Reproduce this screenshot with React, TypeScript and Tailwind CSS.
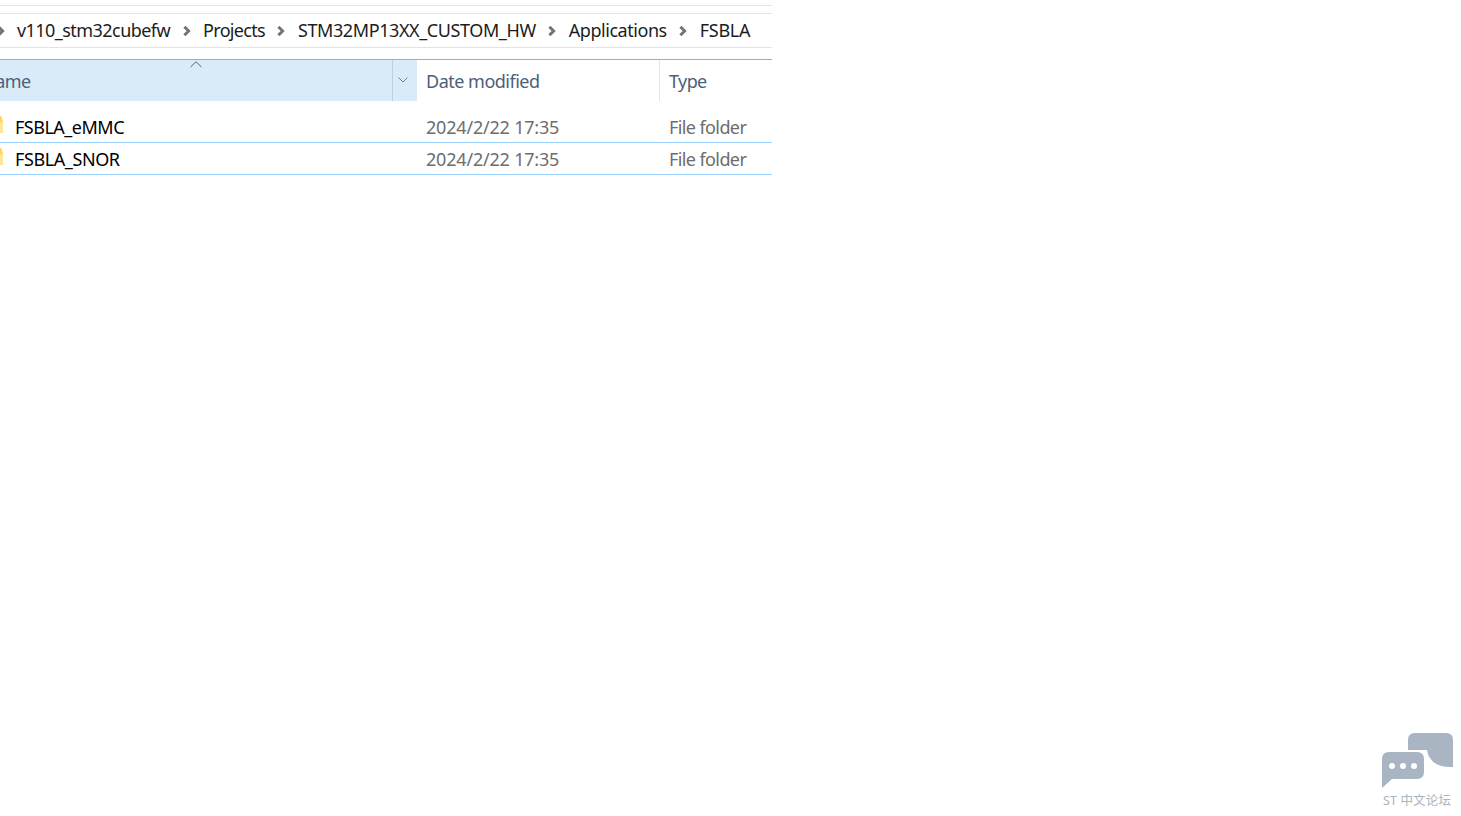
const font = "font-['Noto_Sans','Open_Sans',sans-serif]";

function Chevron() {
  return (
    <svg width="8" height="10" viewBox="0 0 8 10" className="block shrink-0">
      <path d="M1.4 0.8 L5.6 5 L1.4 9.2" fill="none" stroke="#747474" strokeWidth="3" />
    </svg>
  );
}

function Folder() {
  return (
    <svg width="4" height="18" viewBox="0 0 4 18" className="-mt-[5px] shrink-0">
      <path d="M0 0 H1 L3 5 V17 H0 Z" fill="#ffd469" />
      <path d="M0 6 H3 V17 H0 Z" fill="#ffe698" />
    </svg>
  );
}

function Row({ name, spacing }: { name: string; spacing: string }) {
  return (
    <div className="flex h-8 items-center border-b border-[#99d1ff] pt-[1px]">
      <div className="flex w-[426px] items-center">
        <Folder />
        <span className={`ml-[11px] text-[18px] text-black ${spacing}`}>{name}</span>
      </div>
      <span className="w-[243px] text-[18px] tracking-[-0.2px] text-[#6d6d6d]">2024/2/22 17:35</span>
      <span className="text-[18px] tracking-[-0.6px] text-[#6d6d6d]">File folder</span>
    </div>
  );
}

export default function App() {
  return (
    <div className={`relative h-[816px] w-[1461px] overflow-hidden bg-white ${font}`}>
      <div className="w-[772px] pt-[5px]">
        <div className="h-[9px] border-y border-[#e3e3e3]" />
        <div className="flex h-[33px] items-center text-[18px] text-[#1c1c1c]">
          <div className="-ml-[3px] mr-[3px] w-[17px]"><Chevron /></div>
          <span className="tracking-[-0.55px]">v110_stm32cubefw</span>
          <span className="mx-[12.5px]"><Chevron /></span>
          <span className="tracking-[-0.7px]">Projects</span>
          <span className="mx-[12.5px]"><Chevron /></span>
          <span className="tracking-[-0.4px]">STM32MP13XX_CUSTOM_HW</span>
          <span className="mx-[12.5px]"><Chevron /></span>
          <span className="tracking-[-0.45px]">Applications</span>
          <span className="mx-[12.5px]"><Chevron /></span>
          <span className="tracking-[-0.3px]">FSBLA</span>
        </div>
        <div className="h-[12px] border-t border-[#e3e3e3]" />
        <div className="flex h-[42px] border-t border-[#a9a9a9]">
          <div className="relative flex w-[417px] bg-[#d9ebf9]">
            <div className="flex flex-1 items-center overflow-hidden border-r border-[#bcd0df] pt-[2px]">
              <span className="-ml-[18px] text-[18px] tracking-[-0.55px] text-[#4c607a]">Name</span>
            </div>
            <div className="flex w-[24px] items-center justify-center pb-[1px] pr-[4px]">
              <svg width="10" height="6" viewBox="0 0 10 6"><path d="M0.5 0.5 L5 5 L9.5 0.5" fill="none" stroke="#6d7f90" strokeWidth="1" /></svg>
            </div>
            <svg width="12" height="7" viewBox="0 0 12 7" className="absolute left-[190px] top-[1px]"><path d="M0.5 6 L6 0.8 L11.5 6" fill="none" stroke="#666" strokeWidth="1" /></svg>
          </div>
          <div className="flex w-[243px] items-center border-r border-[#e5e5e5] pl-[9px] pt-[2px] text-[18px] tracking-[-0.5px] text-[#4c607a]">Date modified</div>
          <div className="flex items-center pl-[9px] pt-[2px] text-[18px] tracking-[-0.6px] text-[#4c607a]">Type</div>
        </div>
        <div className="pt-[10px]">
          <Row name="FSBLA_eMMC" spacing="tracking-[-0.5px]" />
          <Row name="FSBLA_SNOR" spacing="tracking-[-0.4px]" />
        </div>
      </div>
      <div className="absolute right-[8px] top-[732px] flex w-[72px] flex-col items-center">
        <svg width="72" height="58" viewBox="0 0 72 58">
          <path d="M27 8 Q27 1 34 1 H65 Q72 1 72 8 V35 Q49 36 46 18 H27 Z" fill="#a9b5c2" />
          <path d="M1 27 Q1 20 8 20 H36 Q43 20 43 27 V40 Q43 47 36 47 H11 L1 56 Z" fill="#a9b5c2" />
          <circle cx="11" cy="34" r="3" fill="#fff" />
          <circle cx="22" cy="34" r="3" fill="#fff" />
          <circle cx="33" cy="34" r="3" fill="#fff" />
        </svg>
        <span className="mt-[1px] whitespace-nowrap font-['Noto_Sans','Noto_Sans_CJK_SC',sans-serif] text-[12.5px] leading-[20px] tracking-[0.15px] text-[#aab4c0]">ST 中文论坛</span>
      </div>
    </div>
  );
}
